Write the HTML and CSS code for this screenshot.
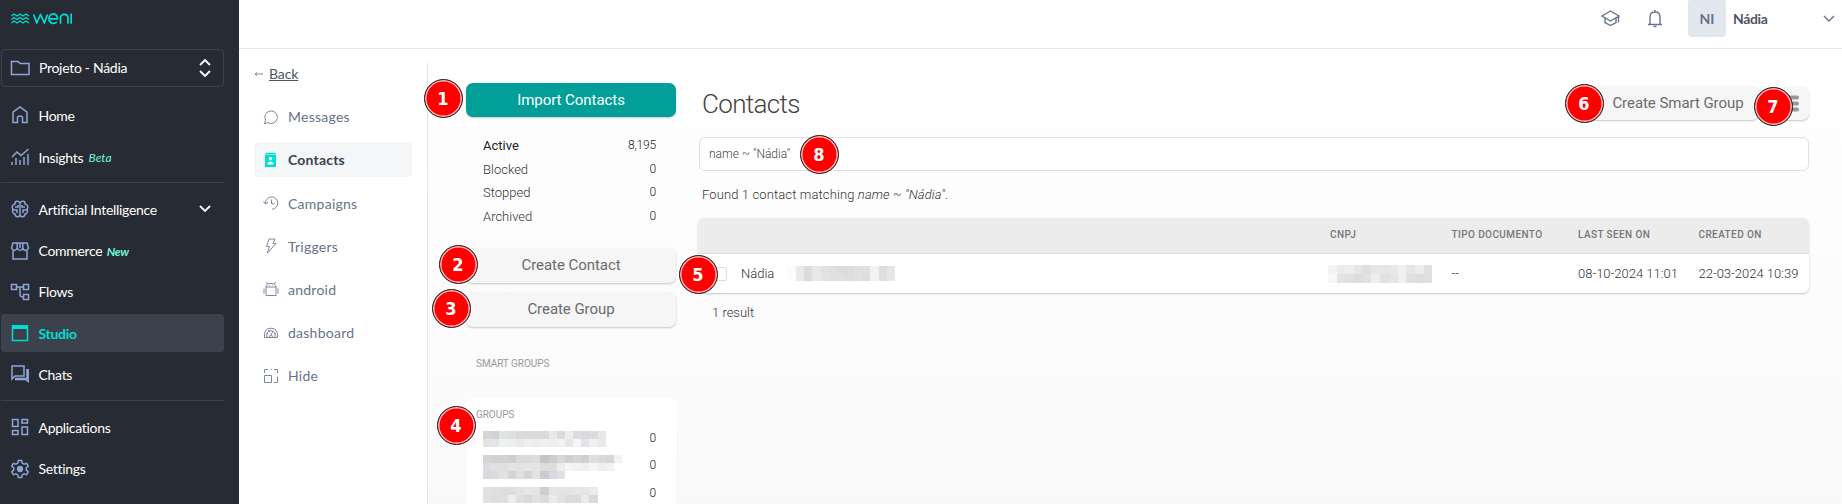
FILE: index.html
```html
<!DOCTYPE html>
<html lang="en">
<head>
<meta charset="utf-8">
<title>Weni - Contacts</title>
<link rel="stylesheet" href="styles.css">
</head>
<body>
<div class="app">
  <aside class="sidebar">
    <svg class="logo" width="62" height="14" viewBox="0 0 62 14" fill="none" stroke="#00ded2" stroke-width="1.3"><path d="M.5 4l2.500-2 3 2 3-2 3 2 3-2 3 2M.5 7.500l2.500-2 3 2 3-2 3 2 3-2 3 2M.5 11l2.500-2 3 2 3-2 3 2 3-2 3 2" stroke-width="1.300"/><g stroke-width="1.7" stroke-linejoin="round"><path d="M22.700 2.500l3 8.500 3.800-8.500 3.800 8.500 3.200-8.500M38 6.800h8.600C46.500 0 38 .5 38 6.800c0 5 5.500 5.500 7.800 3.200M49.500 11.800V6.500c0-5.500 7.500-5.500 7.500 0v5.300M60.200 1.500v10.300"/></g></svg>
    <div class="project">
      <svg class="ico" viewBox="0 0 20 20"><path d="M1.500 3.500h6.500l2 2h9v11H1.500z"/></svg>
      <span class="grow">Projeto - Nádia</span>
      <svg class="sort" width="12" height="18" viewBox="0 0 12 18"><path d="M1 6l5-5 5 5M1 12l5 5 5-5"/></svg>
    </div>
    <nav class="menu">
      <a><svg class="ico" viewBox="0 0 20 20"><path d="M3 17.500V7.200L10 2l7 5.200v10.300h-4.500v-5.500q-2.500-2-5 0v5.500z"/></svg>Home</a>
      <a><svg class="ico" viewBox="0 0 20 20"><path d="M2 10l5-5 4 3.500L18.500 2M2 15v3M6 11v7M10 13v5M14 10v8M18 7v11"/></svg>Insights <em>Beta</em></a>
    </nav>
    <hr>
    <nav class="menu">
      <a><svg class="ico" viewBox="0 0 20 20"><path d="M10 3v14M10 4C8 1 4.500 2 5 5 2 5.500 1.500 9 3 10c-1.500 2 0 5 2 5 0 3 4 4 5 1M10 4c2-3 5.500-2 5 1 3 .5 3.500 4 2 5 1.500 2 0 5-2 5 0 3-4 4-5 1M5 8h3v-2M3.500 11H7v3M15 8h-3v-2M16.500 11H13v3"/></svg><span class="grow">Artificial Intelligence</span><svg class="chev" width="12" height="8" viewBox="0 0 12 8"><path d="M1 1l5 5 5-5"/></svg></a>
      <a><svg class="ico" viewBox="0 0 20 20"><path d="M3 2h14l1.500 5q-1 2.500-3 2.500T12.800 7q-1 2.500-2.800 2.500T7.200 7q-1 2.500-2.700 2.500T1.500 7zM7.200 2v5M12.800 2v5M10 2v5M3 9.500V18h14V9.500"/></svg>Commerce <em class="new">New</em></a>
      <a><svg class="ico" viewBox="0 0 20 20"><path d="M1.500 2.500h5v5h-5zM13.500 2.500h5v5h-5zM13.500 12.500h5v5h-5zM6.500 5h7M10 5v8q0 2 3.500 2"/></svg>Flows</a>
      <a class="on"><svg class="ico" viewBox="0 0 20 20"><path d="M2.500 3h15v14.500h-15z"/><path d="M2 2h16v4H2z" fill="#00ded2" stroke="none"/></svg>Studio</a>
      <a><svg class="ico" viewBox="0 0 20 20"><path d="M2 2h12v10H5l-3 3z"/><path d="M17 5v9.500H5M18.200 5v12.500L15.500 15.500H5"/></svg>Chats</a>
    </nav>
    <hr class="second">
    <nav class="menu">
      <a><svg class="ico" viewBox="0 0 20 20"><path d="M2.500 2.500h5.500v7H2.500zM12 2.500h5.500v3.500H12zM12 10h5.500v7.500H12zM2.500 13.500h5.500v4H2.500z"/></svg>Applications</a>
      <a><svg class="ico" viewBox="0 0 20 20"><path d="M8.300 1.500h3.400l.5 2.600 1.900 1 2.500-.8 1.700 2.900-2 1.700v2.200l2 1.700-1.700 2.900-2.500-.8-1.900 1-.5 2.600H8.300l-.5-2.600-1.900-1-2.500.8-1.700-2.900 2-1.700V8.900l-2-1.700 1.700-2.900 2.500.8 1.900-1z"/><circle cx="10" cy="10" r="2.400" fill="#8fa5d6"/></svg>Settings</a>
    </nav>
  </aside>

  <div class="page">
    <header class="topbar">
      <svg class="cap" width="19" height="17" viewBox="0 0 19 17"><path d="M1 6l8.500-5L18 6l-8.500 5zM4 8v4.500l5.500 3 5.500-3V8M17.500 6v6.500"/></svg>
      <svg class="bell" width="16" height="18" viewBox="0 0 16 18"><path d="M1 14.500h14M3 14.500V7q0-5 5-5t5 5v7.500M8 2V0M6.500 16.500h3"/></svg>
      <span class="avatar">NI</span>
      <span class="user">Nádia</span>
      <svg width="12" height="7" viewBox="0 0 12 7"><path d="M1 1l5 5 5-5"/></svg>
    </header>
    <div class="body">
      <nav class="subnav">
        <div class="back"><svg viewBox="0 0 10 8"><path d="M9 4H1M3 2.500L1 4l2 1.500"/></svg><u>Back</u></div>
        <a><svg viewBox="0 0 16 16"><path d="M1.500 14.800l1-3.700A6.300 6.300 0 1 1 5 13.700z"/></svg>Messages</a>
        <a class="on"><svg viewBox="0 0 16 16"><path d="M2 2.500h11V15H2z" fill="#00ded2" stroke="none"/><path d="M2.500 .8h10v1.200h-10z" fill="#00ded2" stroke="none"/><circle cx="7.500" cy="6.800" r="1.800" fill="#fff" stroke="none"/><path d="M4.500 12.500v-1.700l2-1h2l2 1v1.700z" fill="#fff" stroke="none"/></svg>Contacts</a>
        <a><svg viewBox="0 0 16 16"><path d="M2.500 9A6.200 6.200 0 1 1 9 14.300M.5 6.500l2 2.500 2.500-2M8.500 4.500v4.300h3"/></svg>Campaigns</a>
        <a><svg viewBox="0 0 16 16"><path d="M6 1h6l-2 4.500h3L4.500 15l2-6.500H3.500z"/></svg>Triggers</a>
        <a><svg viewBox="0 0 16 16"><path d="M3 6h10v8.500H3zM3 6q0-3.500 5-3.500T13 6M4.500 3l-1-2M11.500 3l1-2M1 7.500v5M15 7.500v5M6 4.500h.5M9.500 4.500h.5"/></svg>android</a>
        <a><svg viewBox="0 0 16 16"><path d="M1.500 12.500Q.5 3.500 8 3.200q7.500.3 6.500 9.300zM4 12.500Q3 6 8 5.700q5 .3 4 6.800M6.500 12.500Q6.500 10 8 10t1.500 2.500M8 10l2-4M3 8l1.500 1M5.500 5l1 2M13 8l-1.500 1"/></svg>dashboard</a>
        <a><svg viewBox="0 0 16 16"><path d="M1.500 5V1.500H5M11 1.500h3.500V5M14.500 8.500v6H11M8 1.500h1M1.500 7.500H8.500v7H1.500z"/></svg>Hide</a>
      </nav>
      <main class="content">
        <section class="side">
          <button class="btn primary">Import Contacts</button>
          <ul class="status">
            <li class="on"><span>Active</span><b>8,195</b></li>
            <li><span>Blocked</span><b>0</b></li>
            <li><span>Stopped</span><b>0</b></li>
            <li><span>Archived</span><b>0</b></li>
          </ul>
          <button class="btn">Create Contact</button>
          <button class="btn">Create Group</button>
          <h3 class="label">SMART GROUPS</h3>
          <div class="groups">
            <h3 class="label">GROUPS</h3>
            <div class="group"><div class="mosaic" data-rows="d8d5d1 cfd3d7 e0e4e5 dfe1e1 dadada d9d9d9 dadada d9d9d9 e7e8eb dcdbdf ededed dadcdf d8dadb dcdbdf e5e8e7|e4e4e4 e5e6ea f0f2f2 eeeeee e8e9eb f0f0f0 ededef f0f0f1 eeeef0 f2f2f2 e8e7e4 f4f7f8 e4e3e7 f0f0f0 e8eaea"></div><b>0</b></div>
            <div class="group"><div class="mosaic" data-rows="d5d5d5 d4d2d0 d2d2d0 cbcfd0 dadada d8dcdc dadedd c6c4c9 cfcccb d3d9dd d0cecf d5d5d5 d0cfd4 dbe0e2 d9dada d6d6d3 f0f2f7|dcdbdf e0e0e0 e0dfdd e3e4e5 e3e1e4 e5e5e3 e1e5e5 dddddf e1dcdb eceeee f5f5f5 f2f2f2 efefef f5f5f5 eeeeec f3f3f3|dad8dc d9dbdd dfe3e2 d4d4d6 e3dfdd d1d6d9 e4e3e1 cacbd1 d9d8dc dfdfe7"></div><b>0</b></div>
            <div class="group last"><div class="mosaic" data-rows="e3e1e4 e0e0e0 dedfdd dddedd e3e3e3 e6e6e6 e4e4e4 d1ced2 e5e5e3 e4e4e4 e4e4e4 e5e7e6 e3e6e7 ebebeb|e1e1e4 dddedb dfdfdf eeeeee dfe1e0 d8dada e3e1e1 dbdbdb ebebea e3e3e3 dadadf d9dddd eaeaea d9d9d9"></div><b>0</b></div>
          </div>
        </section>
        <section class="main">
          <div class="title">
            <h1>Contacts</h1>
            <div class="actions"><button class="btn smart">Create Smart Group</button><button class="btn more"><svg width="13" height="17" viewBox="0 0 13 17"><path d="M1.500 2.500h9.500M1.500 8.500h9.500M1.500 14.500h9.500" stroke="#999" stroke-width="4" stroke-linecap="round"/></svg></button></div>
          </div>
          <div class="search">name ~ "Nádia"</div>
          <p class="found">Found 1 contact matching <i>name ~ "Nádia"</i>.</p>
          <div class="table">
            <div class="tr head"><span></span><span></span><span>CNPJ</span><span>TIPO DOCUMENTO</span><span>LAST SEEN ON</span><span>CREATED ON</span></div>
            <div class="tr"><span class="check"></span><span class="name">Nádia <span class="mosaic" data-rows="fbfbf8 ebeae8 dcdcda e7e8ea e2e0e1 dfdfe0 dcdedd dbdddc dfe2e1 dfe1e1 f2f2f2 dedddc e5e7e9|fdfdfb ebeae8 dadad8 e7e8ea e4e2e2 dfdfe0 dfe0df dcdedd dfe2e2 dbdedf f2f2f2 e0dfde e5e7e9"></span></span><span class="cnpj"><span class="mosaic" data-rows="f4f4f4 ececea eeeeee e7e6e1 dfdfdf e6e6e6 e5e6e9 e8e8e8 f0f0f0 e6e6e6 ededee e0dfe3|f7f7f7 e4e4e4 e0e0df dddddd e2e2e3 ecedef e1e1e1 e5e6e3 f2f0ed e0e0e0 dddddd dfdee2"></span></span><span>--</span><span>08-10-2024 11:01</span><span>22-03-2024 10:39</span></div>
          </div>
          <p class="result">1 result</p>
        </section>
      </main>
    </div>
  </div>
  <span class="pin p1">1</span><span class="pin p2">2</span><span class="pin p3">3</span><span class="pin p4">4</span>
  <span class="pin p5">5</span><span class="pin p6">6</span><span class="pin p7">7</span><span class="pin p8">8</span>
</div>
<script src="mosaic.js"></script>
</body>
</html>
```
FILE: mosaic.js
```js
// Fills each redacted value with rows of coloured cells.
document.querySelectorAll('.mosaic').forEach(function (box) {
  box.dataset.rows.split('|').forEach(function (line) {
    var row = document.createElement('span');
    row.className = 'cells';
    line.split(' ').forEach(function (color) {
      var cell = document.createElement('i');
      cell.style.background = '#' + color;
      row.appendChild(cell);
    });
    box.appendChild(row);
  });
});
```
FILE: styles.css
```css
* { box-sizing: border-box; }
body { margin: 0; font-family: Roboto, sans-serif; background: #fff; color: #333; }
svg { fill: none; flex: none; display: block; }
h1, h3, p, ul { margin: 0; padding: 0; font-weight: 400; }
.app { position: relative; display: flex; width: 1842px; height: 504px; overflow: hidden; }

.sidebar { width: 239px; flex: none; background: #272b33; padding: 12px 15px 0 1px; font: 14px Lato, sans-serif; letter-spacing: -.3px; color: #fff; }
.logo { margin-left: 10px; }
.project { display: flex; align-items: center; gap: 9px; height: 38px; margin-top: 23px; padding: 0 12px 1px 8px; border: 1px solid #3b414d; border-radius: 4px; }
.project .sort { margin-top: 1px; }
.grow { flex: 1; }
.ico { width: 20px; height: 20px; stroke: #8fa5d6; stroke-width: 1.5; }
.sort, .chev { stroke: #fff; stroke-width: 1.8; }
.menu { display: flex; flex-direction: column; gap: 3.3px; }
.project + .menu { margin-top: 9px; gap: 4.300px; }
.menu a { display: flex; align-items: center; height: 38px; padding: 0 13px 0 9px; border-radius: 4px; white-space: pre; }
.menu .ico { margin-right: 8.500px; }
.menu em { color: #6ff5dc; font-size: 12px; margin-left: 2px; padding-top: 1px; letter-spacing: 0; }
.menu .new { margin-left: 1px; font-weight: 700; letter-spacing: -.4px; }
.menu .on { background: #3b414d; color: #00ded2; font-weight: 700; }
.menu .on .ico { stroke: #00ded2; }
hr { height: 1px; margin: 6px 0 7px; border: 0; background: #3b414d; }
hr.second { margin: 7px 0; }

.page { flex: 1; display: flex; flex-direction: column; min-width: 0; }
.topbar { height: 49px; flex: none; display: flex; align-items: flex-start; justify-content: flex-end; padding-right: 7px; border-bottom: 1px solid #e2e6ed; font: 700 14px Lato, sans-serif; }
.topbar svg { stroke: #67738b; stroke-width: 1.4; margin-top: 15px; }
.topbar .cap { margin: 10px 27px 0 0; }
.topbar .bell { margin: 10px 25px 0 0; }
.avatar { width: 38px; height: 38px; margin-top: -1px; line-height: 40px; text-align: center; border-radius: 4px; background: #e2e6ed; color: #67738b; }
.user { margin-left: 7px; width: 90px; line-height: 38px; color: #4e5666; letter-spacing: -.35px; }
.body { flex: 1; display: flex; min-height: 0; }
.subnav { width: 189px; flex: none; margin-top: 14px; padding: 0 15px; border-right: 1px solid #e2e4ea; font: 14px Lato, sans-serif; color: #67738b; display: flex; flex-direction: column; gap: 8.200px; }
.back { display: flex; align-items: center; gap: 5px; height: 22px; line-height: 22px; margin-bottom: 6px; letter-spacing: -.1px; }
.subnav .back svg { width: 10px; height: 8px; }
.back u { color: #4e5666; }
.subnav a { display: flex; align-items: center; gap: 9px; height: 35px; flex: none; padding-left: 9px; letter-spacing: .25px; border-radius: 4px; }
.subnav svg { width: 16px; height: 16px; stroke: #7c879f; stroke-width: 1; }
.subnav .on { background: #f4f6f8; color: #3b414d; font-weight: 700; letter-spacing: .2px; }

.content { flex: 1; display: flex; padding: 34px 33px 0 38px; background: linear-gradient(#fff, #f9f9f9); min-width: 0; }
.side { width: 210px; flex: none; }
.btn { display: block; width: 100%; height: 35px; margin: 0; padding: 0; border: 0; border-radius: 7px; background: #f6f6f6; color: #6b6b6b; font: 15px Roboto, sans-serif; letter-spacing: -.05px; box-shadow: 0 1px 2px rgba(0,0,0,.22); }
.primary { height: 34px; background: #029e98; color: #fff; }
.status { list-style: none; margin: 17px 20px 19px 17px; font-weight: 300; font-size: 13px; }
.status li { display: flex; justify-content: space-between; height: 23.700px; line-height: 23px; }
.status b, .group b { font-weight: 300; font-size: 12px; color: #222; letter-spacing: -.2px; }
.status .on { font-weight: 400; color: #222; }
.btn + .btn { margin-top: 9px; }
.label { font-size: 10px; line-height: 12px; color: #999; margin: 31px 0 0 10px; letter-spacing: -.05px; }
.groups { height: 120px; margin-top: 28px; padding: 11px 20px 0 17px; border-radius: 7px; background: #fff; }
.groups .label { margin: 0 0 10px -7px; }
.group { display: flex; justify-content: space-between; height: 24px; }
.group + .group { height: 32px; }
.group b { line-height: 14px; }
.group + .group b { line-height: 20px; }
.last b { line-height: 12px !important; }
.cells { display: flex; }
.cells i { width: 8.200px; height: 8px; }

.main { flex: 1; margin-left: 22px; min-width: 0; }
.title { display: flex; justify-content: space-between; height: 54px; }
h1 { font-size: 26px; line-height: 43px; font-weight: 300; margin-left: 4px; letter-spacing: -.65px; color: #444; }
.actions { display: flex; padding-top: 3px; }
.actions .btn { height: 34px; margin: 0; }
.actions .smart { width: 175px; padding-left: 13px; }
.actions .more { width: 50px; padding-left: 27px; margin-top: 1px; height: 33px; }
.search { height: 34px; padding-left: 9px; margin-left: 1px; line-height: 32px; border: 1px solid #e0e0e0; border-radius: 6px; background: #fff; font-size: 12px; font-weight: 300; color: #444; }
.found { margin: 14px 0 14px 4px; font-size: 13px; line-height: 19px; font-weight: 300; letter-spacing: .12px; }
.table { border-radius: 6px; background: #fff; overflow: hidden; box-shadow: 0 1px 2px rgba(0,0,0,.22); }
.tr { display: grid; grid-template-columns: 43px 589px 121.500px 126.500px 120.500px 1fr; align-items: center; height: 39px; font-size: 13px; font-weight: 300; }
.head { height: 36px; background: #ececec; border-bottom: 1px solid #dedede; font-size: 10px; font-weight: 500; letter-spacing: .4px; color: #777; }
.head span { padding-bottom: 2px; }
.check { width: 14px; height: 14px; margin-left: 15px; border: 1px solid #ddd; border-radius: 2px; }
.name { display: flex; align-items: center; gap: 13px; }
.tr .cnpj { margin-left: -2px; }
.tr .cells i { height: 7.500px; }
.tr .name i { width: 8.300px; }
.tr .cnpj i { width: 8.700px; height: 9px; }
.result { margin: 11px 0 0 14px; font-size: 13px; font-weight: 300; line-height: 18px; }

/* Numbered callouts placed over the interface */
.pin { position: absolute; width: 39px; height: 39px; margin: -19.500px 0 0 -19.500px; border: 1.500px solid #222; border-radius: 50%; background: #f00; box-shadow: inset 0 0 0 1.500px #fbb; color: #fff; font: bold 18px/37px "DejaVu Sans Condensed", "DejaVu Sans", sans-serif; font-stretch: condensed; text-align: center; }
.p1 { left: 443px; top: 98px; }
.p2 { left: 458px; top: 264px; }
.p3 { left: 451px; top: 308px; }
.p4 { left: 456px; top: 425px; }
.p5 { left: 698px; top: 274px; }
.p6 { left: 1584px; top: 103px; }
.p7 { left: 1773px; top: 106px; }
.p8 { left: 819px; top: 154px; }
```
